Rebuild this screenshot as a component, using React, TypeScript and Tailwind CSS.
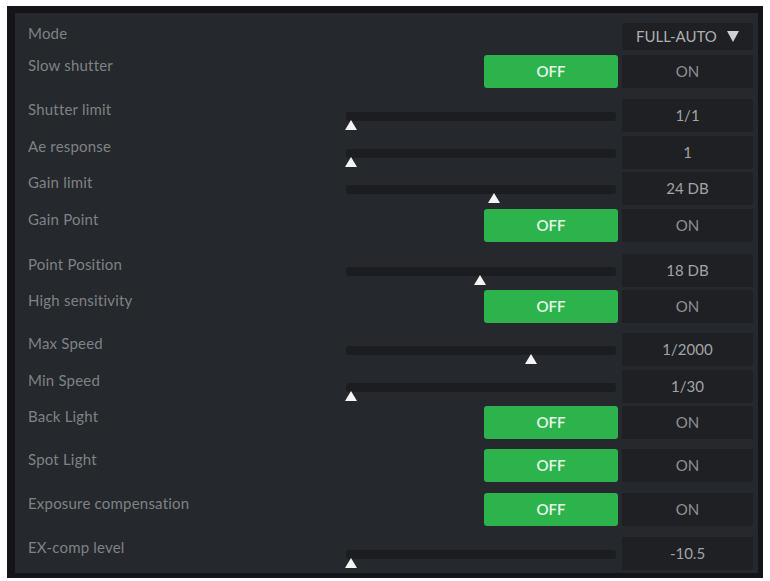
type Row =
  | { kind: "mode"; label: string; value: string; mt: string }
  | { kind: "toggle"; label: string; mt: string }
  | { kind: "slider"; label: string; value: string; thumb: number; mt: string };

// thumb = centre of the marker, in px from the left end of the track
const rows: Row[] = [
  { kind: "mode", label: "Mode", value: "FULL-AUTO", mt: "mt-0" },
  { kind: "toggle", label: "Slow shutter", mt: "mt-[5px]" },
  { kind: "slider", label: "Shutter limit", value: "1/1", thumb: 5, mt: "mt-[11px]" },
  { kind: "slider", label: "Ae response", value: "1", thumb: 5, mt: "mt-[4px]" },
  { kind: "slider", label: "Gain limit", value: "24 DB", thumb: 148, mt: "mt-[3px]" },
  { kind: "toggle", label: "Gain Point", mt: "mt-[4px]" },
  { kind: "slider", label: "Point Position", value: "18 DB", thumb: 134, mt: "mt-[12px]" },
  { kind: "toggle", label: "High sensitivity", mt: "mt-[3px]" },
  { kind: "slider", label: "Max Speed", value: "1/2000", thumb: 185, mt: "mt-[10px]" },
  { kind: "slider", label: "Min Speed", value: "1/30", thumb: 5, mt: "mt-[4px]" },
  { kind: "toggle", label: "Back Light", mt: "mt-[3px]" },
  { kind: "toggle", label: "Spot Light", mt: "mt-[10px]" },
  { kind: "toggle", label: "Exposure compensation", mt: "mt-[11px]" },
  { kind: "slider", label: "EX-comp level", value: "-10.5", thumb: 5, mt: "mt-[11px]" },
];

function Thumb({ left }: { left: number }) {
  return (
    <svg
      width="12"
      height="10"
      viewBox="0 0 12 10"
      className="absolute top-[8px]"
      style={{ left: left - 6 }}
    >
      <polygon points="6,0 12,10 0,10" fill="#f4f4f4" />
    </svg>
  );
}

function ValueBox({
  children,
  h = "h-[33px]",
  tone = "text-[#a2a4a7]",
}: {
  children: React.ReactNode;
  h?: string;
  tone?: string;
}) {
  return (
    <div
      className={`ml-[4px] flex w-[131px] shrink-0 items-center justify-center rounded-[2px] bg-[#1e2023] text-[15px] ${tone} ${h}`}
    >
      {children}
    </div>
  );
}

function SettingRow({ row }: { row: Row }) {
  return (
    <div className={`flex ${row.mt}`}>
      <div className="flex-1 text-[15px] leading-[20px] tracking-[0.2px] text-[#7f8286]">
        {row.label}
      </div>

      {row.kind === "mode" && (
        <ValueBox h="h-[27px]" tone="text-[#adafb2]">
          <span>FULL-AUTO</span>
          <svg width="12" height="11" viewBox="0 0 12 11" className="ml-[10px]">
            <polygon points="0,0 12,0 6,11" fill="#cfd0d2" />
          </svg>
        </ValueBox>
      )}

      {row.kind === "toggle" && (
        <>
          <div className="flex w-[272px] justify-end">
            <div className="flex h-[33px] w-[134px] items-center justify-center rounded-[3px] bg-[#2cb34c] text-[15px] font-semibold text-[#e6f6e9]">
              OFF
            </div>
          </div>
          <ValueBox tone="text-[#8f9194]">ON</ValueBox>
        </>
      )}

      {row.kind === "slider" && (
        <>
          <div className="w-[272px]">
            <div className="relative mt-[13px] h-[9px] w-[270px] rounded-[3px] bg-[#1b1d20]">
              <Thumb left={row.thumb} />
            </div>
          </div>
          <ValueBox>{row.value}</ValueBox>
        </>
      )}
    </div>
  );
}

export default function App() {
  return (
    <div className="h-[581px] w-[770px] bg-white pb-[3px] pl-[7px] pr-[7px] pt-[6px] font-['Lato',sans-serif]">
      <div className="h-full border-b-[5px] border-l-[8px] border-r-[5px] border-t-[7px] border-[#131518] bg-[#25282c] pb-[3px] pl-[13px] pr-[5px] pt-[10px]">
        {rows.map((row) => (
          <SettingRow key={row.label} row={row} />
        ))}
      </div>
    </div>
  );
}
